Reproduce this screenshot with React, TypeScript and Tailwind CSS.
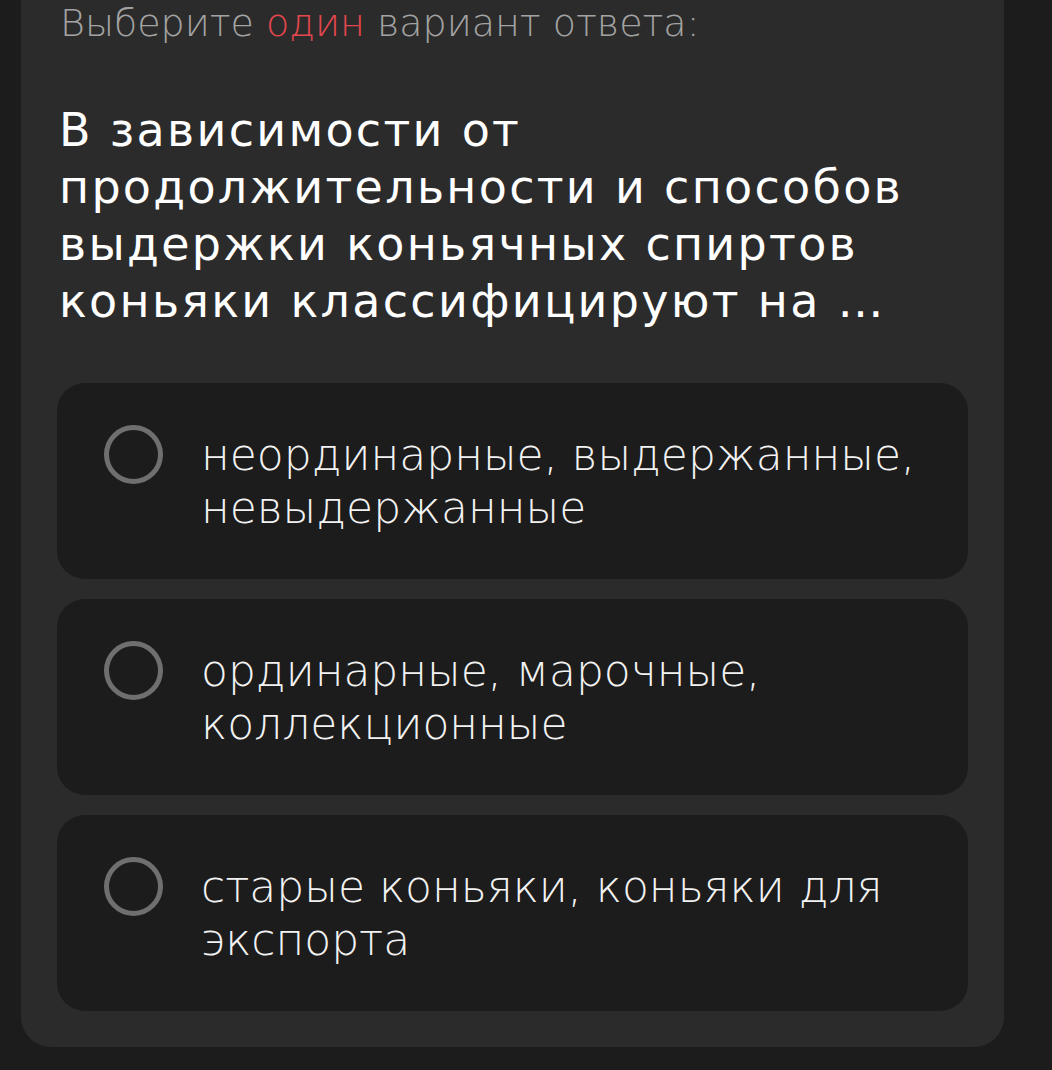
const OPTIONS = [
  ["неординарные, выдержанные,", "невыдержанные"],
  ["ординарные, марочные,", "коллекционные"],
  ["старые коньяки, коньяки для", "экспорта"],
];

const QUESTION = [
  "В зависимости от",
  "продолжительности и способов",
  "выдержки коньячных спиртов",
  "коньяки классифицируют на …",
];

export default function App() {
  return (
    <div className="min-h-[1070px] bg-[#1c1c1c] pl-[21px] pr-[48px] font-['DejaVu_Sans',sans-serif]">
      <div className="bg-[#2b2b2b] rounded-b-[30px] px-[36px] pb-[36px]">
        <p className="pl-[3px] pt-[1px] text-[38px] leading-[44px] font-extralight text-[#a3a3a3]">
          Выберите <span className="text-[#e2474d]">один</span> вариант ответа:
        </p>
        <h2 className="mt-[57px] pl-[2px] text-[46px] leading-[57px] font-normal tracking-[2.3px] text-white">
          {QUESTION.map((l) => (
            <span key={l} className="block whitespace-nowrap">{l}</span>
          ))}
        </h2>
        <div className="mt-[53px] flex flex-col gap-[20px]">
          {OPTIONS.map((o) => (
            <div key={o[0]} className="h-[196px] rounded-[28px] bg-[#1c1c1c] flex items-center pl-[47px] pr-[40px]">
              <div className="w-[59px] h-[59px] shrink-0 self-start mt-[42px] rounded-full border-[5px] border-[#6f6f6f]" />
              <p className="ml-[38px] text-[44px] leading-[53px] font-extralight text-[#f2f2f2]">
                {o.map((l) => (
                  <span key={l} className="block whitespace-nowrap">{l}</span>
                ))}
              </p>
            </div>
          ))}
        </div>
      </div>
    </div>
  );
}
